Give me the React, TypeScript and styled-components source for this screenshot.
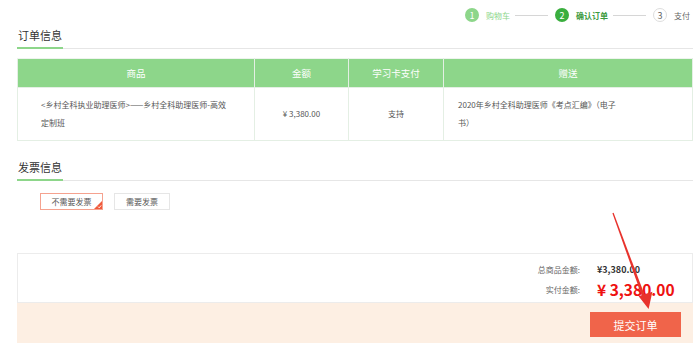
import React, { useState } from 'react';
import styled, { createGlobalStyle } from 'styled-components';

const GlobalStyle = createGlobalStyle`
    html, body {
        margin: 0;
        padding: 0;
        background: #fff;
        font-family: "Noto Sans CJK SC", "Noto Sans", sans-serif;
        color: #333;
    }
`;

const Page = styled.div`
    position: relative;
    width: 700px;
    height: 343px;
    overflow: hidden;
    padding: 0 7px 0 17px;
    box-sizing: border-box;
`;

const Steps = styled.div`
    height: 28px;
    display: flex;
    justify-content: flex-end;
    align-items: center;
    padding-right: 3px;
    padding-top: 2px;
    box-sizing: border-box;
`;

const StepDot = styled.span<{ $state: 'done' | 'active' | 'todo' }>`
    width: 14px;
    height: 14px;
    border-radius: 50%;
    box-sizing: border-box;
    display: inline-flex;
    align-items: center;
    justify-content: center;
    font-size: 9px;
    line-height: 1;
    color: ${(p) => (p.$state === 'todo' ? '#666' : '#fff')};
    background: ${(p) => (p.$state === 'done' ? '#8dd68a' : p.$state === 'active' ? '#3aae3e' : '#fff')};
    border: ${(p) => (p.$state === 'todo' ? '1px solid #ddd' : 'none')};
`;

const StepLabel = styled.span<{ $state: 'done' | 'active' | 'todo' }>`
    margin-left: 7px;
    font-size: 8px;
    font-weight: ${(p) => (p.$state === 'active' ? 700 : 400)};
    color: ${(p) => (p.$state === 'done' ? '#8dd68a' : p.$state === 'active' ? '#3a9a3d' : '#666')};
`;

const StepLine = styled.span`
    width: 33px;
    height: 1px;
    background: #d6d6d6;
    margin: 0 7px 0 5px;
`;

const SectionHead = styled.div<{ $top?: number }>`
    margin-top: ${(p) => p.$top ?? 0}px;
    border-bottom: 1px solid #e6e6e6;
    display: flex;
`;

const SectionTitle = styled.span`
    font-size: 11px;
    line-height: 14px;
    color: #333;
    padding: 0 1px 5px 1px;
    border-bottom: 2px solid #8dd68a;
    margin-bottom: -1px;
`;

const Table = styled.table`
    margin-top: 9px;
    width: 676px;
    border-collapse: collapse;
    table-layout: fixed;
`;

const Th = styled.th<{ $w?: number }>`
    width: ${(p) => (p.$w ? `${p.$w}px` : 'auto')};
    height: 28px;
    padding: 0;
    background: #8dd68a;
    color: #fff;
    font-size: 9.5px;
    font-weight: 400;
    border: 1px solid #e4efe4;
    border-top-color: #eef4ee;
`;

const Td = styled.td<{ $align?: 'left' | 'center'; $pad?: string }>`
    height: 53px;
    padding: ${(p) => p.$pad ?? '0'};
    border: 1px solid #e4efe4;
    text-align: ${(p) => p.$align ?? 'center'};
    font-size: 8px;
    line-height: 18px;
    color: #555;
    box-sizing: border-box;
`;

const InvoiceRow = styled.div`
    display: flex;
    gap: 11px;
    margin: 12px 0 0 23px;
`;

const InvoiceBtn = styled.button<{ $selected?: boolean }>`
    position: relative;
    height: 17px;
    width: ${(p) => (p.$selected ? 63 : 56)}px;
    padding: 0;
    background: #fff;
    border: 1px solid ${(p) => (p.$selected ? '#f5a28f' : '#e6e6e6')};
    font-family: inherit;
    font-size: 8px;
    color: #555;
    cursor: pointer;
    overflow: hidden;
`;

const Corner = styled.span`
    position: absolute;
    right: 0;
    bottom: 0;
    width: 0;
    height: 0;
    border-left: 8px solid transparent;
    border-bottom: 8px solid #f05a3c;
`;

const CornerTick = styled.svg`
    position: absolute;
    right: 0;
    bottom: 0;
`;

const Summary = styled.div`
    margin-top: 43px;
    width: 676px;
    border: 1px solid #ececec;
    box-sizing: border-box;
    height: 50px;
    padding: 7px 17px 0 0;
    display: grid;
    grid-template-columns: auto 78px;
    justify-content: end;
    column-gap: 17px;
    align-content: start;
    align-items: center;
`;

const SumLabel = styled.span`
    font-size: 8px;
    color: #666;
    text-align: right;
    line-height: 17px;
`;

const SumValue = styled.span<{ $big?: boolean }>`
    font-weight: 700;
    font-size: ${(p) => (p.$big ? 15.5 : 9)}px;
    line-height: ${(p) => (p.$big ? 22 : 17)}px;
    color: ${(p) => (p.$big ? '#ee1111' : '#333')};
    white-space: nowrap;
`;

const Footer = styled.div`
    width: 676px;
    background: #fdefe3;
    display: flex;
    justify-content: flex-end;
    padding: 9px 12px 10px 0;
    box-sizing: border-box;
`;

const SubmitBtn = styled.button`
    width: 91px;
    height: 25px;
    border: none;
    background: #f0644a;
    color: #fff;
    font-family: inherit;
    font-size: 11px;
    cursor: pointer;
`;

const Arrow = styled.svg`
    position: absolute;
    left: 0;
    top: 0;
    pointer-events: none;
`;

const steps: { n: number; label: string; state: 'done' | 'active' | 'todo' }[] = [
    { n: 1, label: '购物车', state: 'done' },
    { n: 2, label: '确认订单', state: 'active' },
    { n: 3, label: '支付', state: 'todo' },
];

const App = () => {
    const [needInvoice, setNeedInvoice] = useState(false);

    return (
        <Page>
            <GlobalStyle />
            <Steps>
                {steps.map((s, i) => (
                    <React.Fragment key={s.n}>
                        <StepDot $state={s.state}>{s.n}</StepDot>
                        <StepLabel $state={s.state}>{s.label}</StepLabel>
                        {i < steps.length - 1 && <StepLine />}
                    </React.Fragment>
                ))}
            </Steps>

            <SectionHead>
                <SectionTitle>订单信息</SectionTitle>
            </SectionHead>

            <Table>
                <thead>
                    <tr>
                        <Th $w={236}>商品</Th>
                        <Th $w={93}>金额</Th>
                        <Th $w={94}>学习卡支付</Th>
                        <Th>赠送</Th>
                    </tr>
                </thead>
                <tbody>
                    <tr>
                        <Td $align="left" $pad="0 27px 0 23px">
                            &lt;乡村全科执业助理医师&gt;——乡村全科助理医师-高效定制班
                        </Td>
                        <Td>¥ 3,380.00</Td>
                        <Td>支持</Td>
                        <Td $align="left" $pad="0 70px 0 14px">
                            2020年乡村全科助理医师《考点汇编》（电子书）
                        </Td>
                    </tr>
                </tbody>
            </Table>

            <SectionHead $top={19}>
                <SectionTitle>发票信息</SectionTitle>
            </SectionHead>

            <InvoiceRow>
                <InvoiceBtn $selected={!needInvoice} onClick={() => setNeedInvoice(false)}>
                    不需要发票
                    {!needInvoice && (
                        <>
                            <Corner />
                            <CornerTick width="8" height="8" viewBox="0 0 8 8">
                                <path d="M4 5.6 L5.2 6.8 L7.2 4.4" fill="none" stroke="#fff" strokeWidth="0.9" />
                            </CornerTick>
                        </>
                    )}
                </InvoiceBtn>
                <InvoiceBtn $selected={needInvoice} onClick={() => setNeedInvoice(true)}>
                    需要发票
                </InvoiceBtn>
            </InvoiceRow>

            <Summary>
                <SumLabel>总商品金额:</SumLabel>
                <SumValue>¥3,380.00</SumValue>
                <SumLabel>实付金额:</SumLabel>
                <SumValue $big>¥ 3,380.00</SumValue>
            </Summary>
            <Footer>
                <SubmitBtn>提交订单</SubmitBtn>
            </Footer>

            <Arrow width="700" height="343" viewBox="0 0 700 343">
                <polygon points="612.4,213.2 613.6,212.8 645.2,296.6 642.4,297.6" fill="#e8322c" />
                <polygon points="638.6,296.2 652.4,291.8 648.6,309" fill="#e8322c" />
            </Arrow>
        </Page>
    );
};

export default App;
